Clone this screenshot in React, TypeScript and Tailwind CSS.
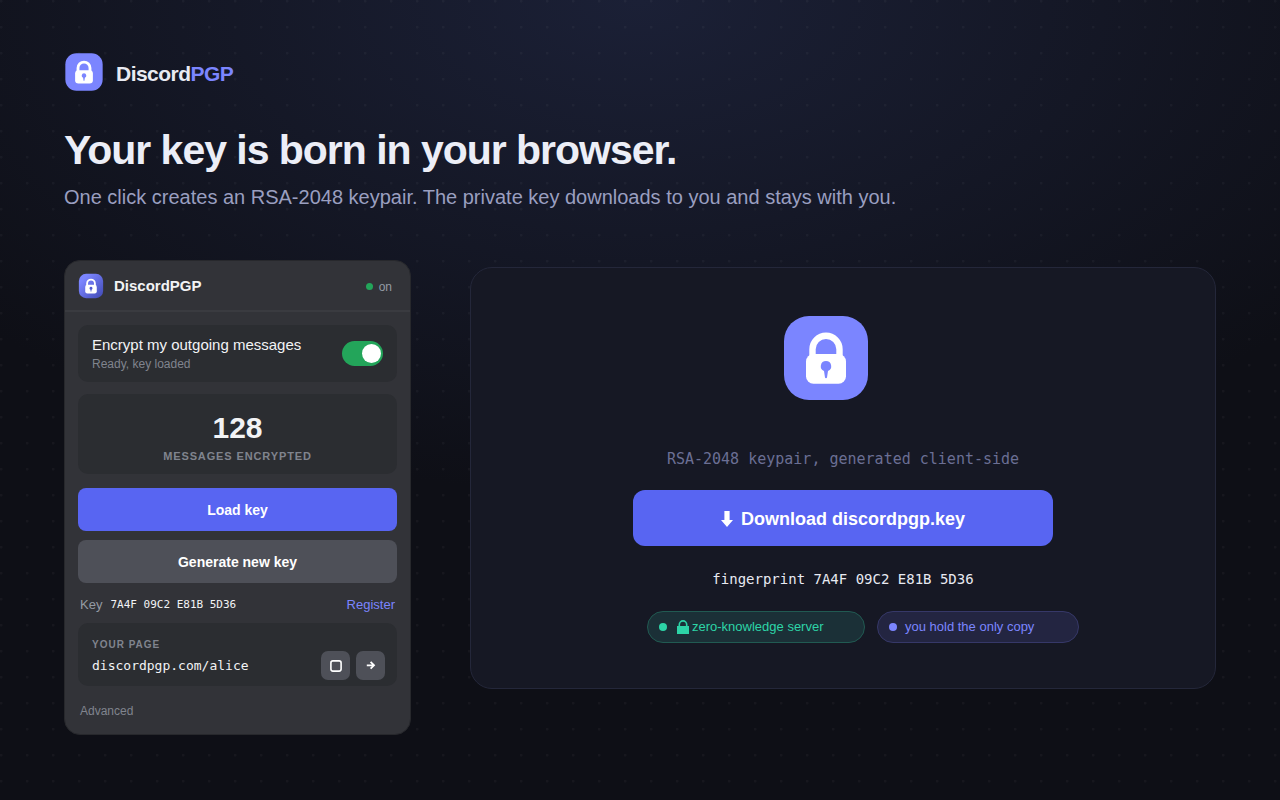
import { useState } from "react";

type LockLogoProps = { className: string; gradient?: boolean };

function LockLogo({ className, gradient = false }: LockLogoProps) {
  return (
    <svg viewBox="-3 -3 90 90" className={className} aria-hidden="true">
      <defs>
        <linearGradient id="logo-shade" x1="0" y1="0" x2="1" y2="1">
          <stop offset="0.2" stopColor="#7b85ff" />
          <stop offset="1" stopColor="#4049b4" />
        </linearGradient>
      </defs>
      <rect width="84" height="84" rx="25" fill={gradient ? "url(#logo-shade)" : "#7b85ff"} />
      <path d="M28.5 40V33.2a13.5 13.5 0 0 1 27 0V40" fill="none" stroke="#fff" strokeWidth="6.4" />
      <rect x="22" y="38" width="40" height="29.8" rx="7.5" fill="#fff" />
      <path
        d="M42 45a5.2 5.2 0 0 1 2 10L43 61.4q-.2.8-1 .8t-1-.8L40 55A5.2 5.2 0 0 1 42 45Z"
        fill={gradient ? "#4f5ad0" : "#7b85ff"}
      />
    </svg>
  );
}

function ExtensionPopup() {
  const [encrypting, setEncrypting] = useState(true);

  return (
    <section className="w-[347px] shrink-0 overflow-hidden rounded-2xl border border-[#27282c] bg-[#323338]">
      <header className="flex h-[51px] items-center border-b-2 border-[#3a3b40] px-[13px]">
        <LockLogo className="size-[26px]" gradient />
        <h2 className="ml-[10px] pt-[2px] text-[15px] font-bold text-[#f2f3f5]">DiscordPGP</h2>
        <span className="ml-auto flex items-center gap-[6px] pt-[2px] pr-[5px] text-xs text-[#949ba4]">
          <span className="size-[7px] rounded-full bg-[#23a55a]" />
          on
        </span>
      </header>

      <div className="px-[13px] pt-[13px]">
        <div className="flex h-[57px] items-center justify-between rounded-[10px] bg-[#2b2d31] px-[14px]">
          <label htmlFor="encrypt" className="flex flex-col">
            <span className="text-[15px] leading-5 text-[#f2f3f5]">Encrypt my outgoing messages</span>
            <span className="text-xs leading-[18px] text-[#80848e]">Ready, key loaded</span>
          </label>
          <input
            id="encrypt"
            type="checkbox"
            role="switch"
            checked={encrypting}
            onChange={(e) => setEncrypting(e.target.checked)}
            className="flex h-[25px] w-[41px] appearance-none items-center rounded-full bg-[#80848e] px-[2px] before:size-[19px] before:rounded-full before:bg-white checked:justify-end checked:bg-[#23a55a]"
          />
        </div>

        <div className="mt-3 flex h-20 flex-col items-center justify-center rounded-[10px] bg-[#2b2d31] pt-[7px]">
          <strong className="text-[30px] leading-9 font-bold text-[#f2f3f5]">128</strong>
          <span className="text-[11px] leading-5 font-bold tracking-[0.08em] text-[#80848e]">MESSAGES ENCRYPTED</span>
        </div>

        <button type="button" className="mt-[14px] h-[43px] w-full rounded-lg bg-[#5865f2] text-sm font-bold text-white">
          Load key
        </button>
        <button type="button" className="mt-[9px] h-[43px] w-full rounded-lg bg-[#4e5058] text-sm font-bold text-white">
          Generate new key
        </button>

        <div className="flex h-10 items-center px-[2px] pt-1 text-[13px] text-[#949ba4]">
          <span>Key</span>
          <code className="ml-2 font-['DejaVu_Sans_Mono',monospace] text-[11px] text-[#f2f3f5]">7A4F 09C2 E81B 5D36</code>
          <a href="#register" className="ml-auto text-[#7b85ff]">
            Register
          </a>
        </div>

        <div className="flex h-[63px] items-end justify-between rounded-[10px] bg-[#2b2d31] pr-3 pb-[6px] pl-[14px]">
          <div className="pb-[3px]">
            <div className="text-[10px] leading-5 font-bold tracking-widest text-[#80848e]">YOUR PAGE</div>
            <div className="font-['DejaVu_Sans_Mono',monospace] text-[13px] leading-[22px] text-[#f2f3f5]">discordpgp.com/alice</div>
          </div>
          <div className="flex gap-[6px]">
            <button type="button" aria-label="Copy link" className="flex size-[29px] items-center justify-center rounded-[7px] bg-[#4e5058]">
              <svg viewBox="0 0 12 12" className="size-3" fill="none" stroke="#fff" strokeWidth="1.6">
                <rect x="0.9" y="0.9" width="10.2" height="10.2" rx="2" />
              </svg>
            </button>
            <button type="button" aria-label="Open page" className="flex size-[29px] items-center justify-center rounded-[7px] bg-[#4e5058]">
              <svg viewBox="0 0 10 10" className="size-[10px]" fill="none" stroke="#fff" strokeWidth="1.8">
                <path d="M.8 4.3h7.2M4.6.9 8 4.3 4.6 7.7" />
              </svg>
            </button>
          </div>
        </div>

        <a href="#advanced" className="flex h-12 items-center px-[2px] pt-[2px] text-xs text-[#80848e]">
          Advanced
        </a>
      </div>
    </section>
  );
}

function KeyPanel() {
  return (
    <section className="mt-[7px] flex h-[422px] min-w-0 flex-1 flex-col items-center rounded-[22px] border border-[#24273a] bg-[#161824] pt-[45px]">
      <LockLogo className="mr-[34px] size-[90px]" />
      <p className="mt-[46px] font-['DejaVu_Sans_Mono',monospace] text-[15px] leading-5 text-[#6b6f94]">
        RSA-2048 keypair, generated client-side
      </p>
      <button
        type="button"
        className="mt-[21px] flex h-14 w-[420px] items-center justify-center gap-2 rounded-xl bg-[#5865f2] pt-[2px] text-lg font-bold text-white"
      >
        <svg viewBox="0 0 12 16" className="h-4 w-3" fill="#fff" aria-hidden="true">
          <path d="M3.4 0h5.2v9H12L6 16 0 9h3.4Z" />
        </svg>
        Download discordpgp.key
      </button>
      <p className="mt-[23px] font-['DejaVu_Sans_Mono',monospace] text-sm leading-5 text-[#e8eaf2]">
        fingerprint 7A4F 09C2 E81B 5D36
      </p>
      <ul className="mt-[22px] ml-10 flex gap-3 text-[13px]">
        <li className="flex h-8 w-[218px] items-center rounded-full border border-[#215a52] bg-[#1b3037] pl-[11px] text-[#2dd4a7]">
          <span className="size-2 rounded-full bg-[#2dd4a7]" />
          <svg viewBox="0 0 12 14" className="mr-[3px] ml-[10px] h-[14px] w-3" aria-hidden="true">
            <path d="M2.3 6V4.6a3.7 3.7 0 0 1 7.4 0V6" fill="none" stroke="#2dd4a7" strokeWidth="1.6" />
            <path d="M0 6h12v8H0z" fill="#2dd4a7" />
          </svg>
          zero-knowledge server
        </li>
        <li className="flex h-8 w-[202px] items-center gap-2 rounded-full border border-[#363868] bg-[#232541] pl-[11px] text-[#7b85ff]">
          <span className="size-2 rounded-full bg-[#7b85ff]" />
          you hold the only copy
        </li>
      </ul>
    </section>
  );
}

export default function App() {
  return (
    <div className="min-h-screen bg-[#0e0f16] bg-[radial-gradient(ellipse_68%_62%_at_50%_0%,#1b2036,#0e0f16)] font-['Liberation_Sans',Arial,sans-serif]">
      <div className="min-h-screen bg-[radial-gradient(circle_at_1px_1px,rgba(255,255,255,0.035)_1px,transparent_2px)] bg-size-[26px_26px] px-16 pt-13 pb-16">
        <div className="flex h-10 items-center gap-3">
          <LockLogo className="size-10" />
          <span className="pt-1 text-[21px] font-bold tracking-tight text-[#e8eaf2]">
            Discord<span className="text-[#7b85ff]">PGP</span>
          </span>
        </div>
        <h1 className="mt-8 text-[41px] leading-[52px] font-bold tracking-tight text-[#eceef7]">
          Your key is born in your browser.
        </h1>
        <p className="mt-[7px] text-xl leading-7 text-[#9a9fc0]">
          One click creates an RSA-2048 keypair. The private key downloads to you and stays with you.
        </p>
        <main className="mt-[49px] flex items-start gap-[59px]">
          <ExtensionPopup />
          <KeyPanel />
        </main>
      </div>
    </div>
  );
}
